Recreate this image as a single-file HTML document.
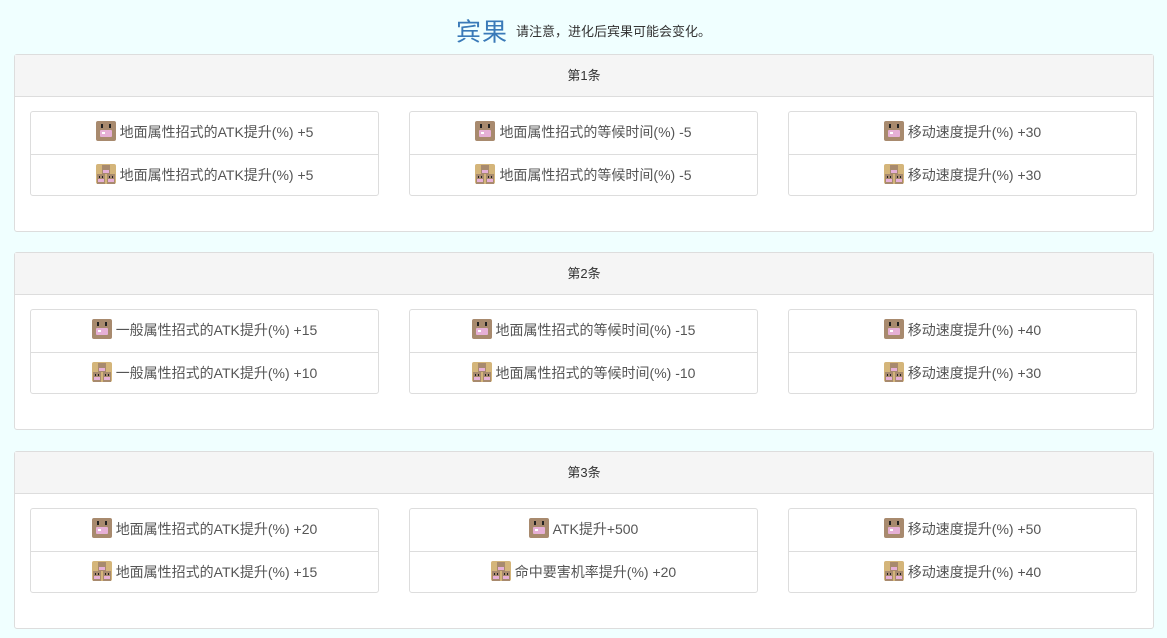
<!DOCTYPE html>
<html><head><meta charset="utf-8">
<style>
*{box-sizing:border-box;margin:0;padding:0}
body{width:1167px;height:638px;background:#f0ffff;font-family:"Liberation Sans","Noto Sans CJK SC",sans-serif;color:#555;overflow:hidden}
h1{height:54px;text-align:center;font-weight:normal;padding-top:10px;white-space:nowrap}
h1 .t{font-size:25px;color:#3a7ab8;vertical-align:middle;letter-spacing:1px}
h1 .s{font-size:13px;color:#333;vertical-align:middle;margin-left:8px}
.panel{position:absolute;left:14px;width:1140px;height:178px;background:#fff;border:1px solid #ddd;border-radius:3px}
.hd{height:42px;background:#f5f5f5;border-bottom:1px solid #ddd;text-align:center;line-height:41px;font-size:13px;color:#333}
.box{position:absolute;top:56px;width:349px;height:85px;border:1px solid #ddd;border-radius:3px}
.row{height:42px;line-height:40px;text-align:center;font-size:14px;color:#555}
.row+.row{border-top:1px solid #ddd}
svg{width:20px;height:20px;vertical-align:-4px;margin-right:4px}
</style></head><body>
<svg width="0" height="0" style="position:absolute">
<defs>
<symbol id="a" viewBox="0 0 20 20"><rect width="20" height="20" rx="2" fill="#a88a6e"/><rect x="5" y="3" width="2" height="4" fill="#222"/><rect x="13" y="3" width="2" height="4" fill="#222"/><rect x="4" y="9" width="12" height="7" rx="1" fill="#e6b0d6"/><rect x="6" y="11" width="3" height="2" fill="#fff"/></symbol>
<symbol id="b" viewBox="0 0 20 20"><rect width="20" height="20" rx="2" fill="#d4b57a"/><rect x="6" y="1" width="8" height="9" fill="#a88a6e"/><rect x="7" y="6" width="6" height="3" fill="#e6b0d6"/><rect x="1" y="10" width="8" height="10" fill="#a88a6e"/><rect x="11" y="10" width="8" height="10" fill="#a88a6e"/><rect x="2" y="15" width="6" height="3" fill="#e6b0d6"/><rect x="12" y="15" width="6" height="3" fill="#e6b0d6"/><rect x="3" y="12" width="1" height="2" fill="#222"/><rect x="6" y="12" width="1" height="2" fill="#222"/><rect x="13" y="12" width="1" height="2" fill="#222"/><rect x="16" y="12" width="1" height="2" fill="#222"/></symbol>
</defs></svg>
<h1><span class="t">宾果</span><span class="s">请注意，进化后宾果可能会变化。</span></h1>

<div class="panel" style="top:54px"><div class="hd">第1条</div>
<div class="box" style="left:15px"><div class="row"><svg><use href="#a"/></svg>地面属性招式的ATK提升(%) +5</div><div class="row"><svg><use href="#b"/></svg>地面属性招式的ATK提升(%) +5</div></div>
<div class="box" style="left:394px"><div class="row"><svg><use href="#a"/></svg>地面属性招式的等候时间(%) -5</div><div class="row"><svg><use href="#b"/></svg>地面属性招式的等候时间(%) -5</div></div>
<div class="box" style="left:773px"><div class="row"><svg><use href="#a"/></svg>移动速度提升(%) +30</div><div class="row"><svg><use href="#b"/></svg>移动速度提升(%) +30</div></div>
</div>

<div class="panel" style="top:252px"><div class="hd">第2条</div>
<div class="box" style="left:15px"><div class="row"><svg><use href="#a"/></svg>一般属性招式的ATK提升(%) +15</div><div class="row"><svg><use href="#b"/></svg>一般属性招式的ATK提升(%) +10</div></div>
<div class="box" style="left:394px"><div class="row"><svg><use href="#a"/></svg>地面属性招式的等候时间(%) -15</div><div class="row"><svg><use href="#b"/></svg>地面属性招式的等候时间(%) -10</div></div>
<div class="box" style="left:773px"><div class="row"><svg><use href="#a"/></svg>移动速度提升(%) +40</div><div class="row"><svg><use href="#b"/></svg>移动速度提升(%) +30</div></div>
</div>

<div class="panel" style="top:451px"><div class="hd">第3条</div>
<div class="box" style="left:15px"><div class="row"><svg><use href="#a"/></svg>地面属性招式的ATK提升(%) +20</div><div class="row"><svg><use href="#b"/></svg>地面属性招式的ATK提升(%) +15</div></div>
<div class="box" style="left:394px"><div class="row"><svg><use href="#a"/></svg>ATK提升+500</div><div class="row"><svg><use href="#b"/></svg>命中要害机率提升(%) +20</div></div>
<div class="box" style="left:773px"><div class="row"><svg><use href="#a"/></svg>移动速度提升(%) +50</div><div class="row"><svg><use href="#b"/></svg>移动速度提升(%) +40</div></div>
</div>
</body></html>
